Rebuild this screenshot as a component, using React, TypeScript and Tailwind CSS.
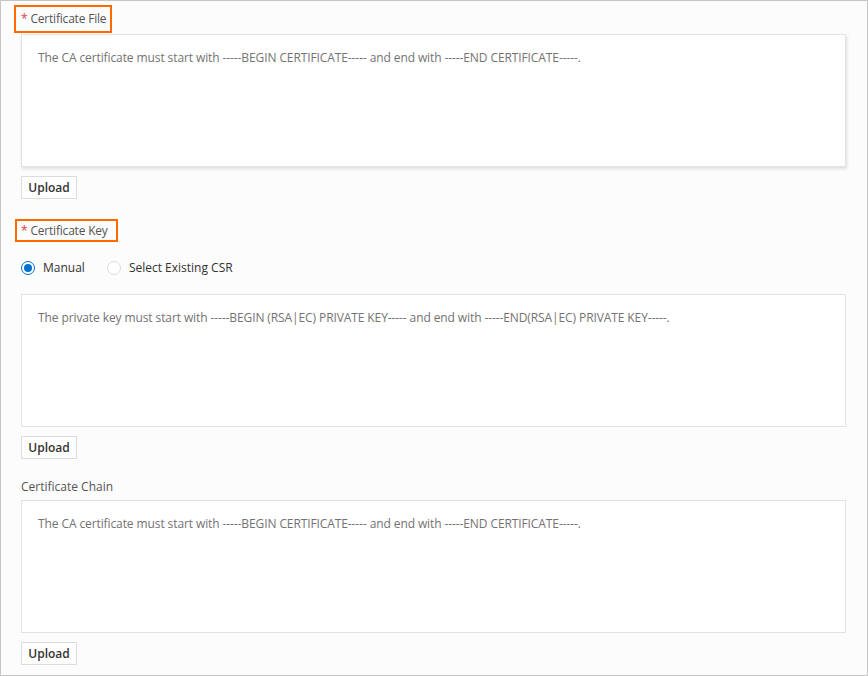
import React from 'react';

const font = { fontFamily: '"Open Sans", "Noto Sans", Arial, sans-serif' };

const Field: React.FC<{ text: string; shadow?: boolean }> = ({ text, shadow }) => (
    <div
        className={`h-[133px] w-[825px] border border-[#e3e3e3] bg-white pl-[16px] pt-[14px] text-[12px] leading-[18px] tracking-[-0.1px] text-[#737373] ${
            shadow ? 'shadow-[1px_2px_3px_rgba(0,0,0,0.12)]' : ''
        }`}
    >
        {text}
    </div>
);

const UploadButton: React.FC = () => (
    <button className="flex h-[23px] w-[56px] items-center justify-center border border-[#dcdcdc] bg-white text-[12px] font-semibold text-[#333]">
        Upload
    </button>
);

const Radio: React.FC<{ checked?: boolean; label: string }> = ({ checked, label }) => (
    <label className="flex items-center gap-[8px] text-[12px] leading-[18px] text-[#333]">
        {checked ? (
            <span className="flex h-[14px] w-[14px] items-center justify-center rounded-full border border-[#0070cc] bg-white">
                <span className="h-[8px] w-[8px] rounded-full bg-[#0070cc]" />
            </span>
        ) : (
            <span className="h-[14px] w-[14px] rounded-full border border-[#dcdcdc] bg-white" />
        )}
        {label}
    </label>
);

const caText =
    'The CA certificate must start with -----BEGIN CERTIFICATE----- and end with -----END CERTIFICATE-----.';

export default function App() {
    return (
        <div
            className="flex h-[676px] w-[868px] flex-col border border-[#c6c6c6] bg-[#fcfcfc] pl-[20px]"
            style={font}
        >
            {/* Certificate File */}
            <div className="-ml-[7px] mt-[4px] flex h-[28px] w-[98px] items-center whitespace-nowrap border-2 border-[#ff6a00] pl-[5px] text-[12px] tracking-[-0.2px] text-[#555]">
                <span className="mr-[3px] text-[#e0393e]">*</span>Certificate File
            </div>
            <div className="mt-[1px]">
                <Field text={caText} shadow />
            </div>
            <div className="mt-[9px]">
                <UploadButton />
            </div>

            {/* Certificate Key */}
            <div className="-ml-[6px] mt-[20px] flex h-[23px] w-[103px] items-center whitespace-nowrap border-2 border-[#ff6a00] pl-[4px] text-[12px] tracking-[-0.2px] text-[#555]">
                <span className="mr-[3px] text-[#e0393e]">*</span>Certificate Key
            </div>
            <div className="mt-[17px] flex items-center gap-[22px]">
                <Radio checked label="Manual" />
                <Radio label="Select Existing CSR" />
            </div>
            <div className="mt-[17px]">
                <Field text="The private key must start with -----BEGIN (RSA|EC) PRIVATE KEY----- and end with -----END(RSA|EC) PRIVATE KEY-----." />
            </div>
            <div className="mt-[9px]">
                <UploadButton />
            </div>

            {/* Certificate Chain */}
            <div className="mt-[19px] text-[12px] leading-[18px] text-[#555]">Certificate Chain</div>
            <div className="mt-[4px]">
                <Field text={caText} />
            </div>
            <div className="mt-[9px]">
                <UploadButton />
            </div>
        </div>
    );
}
